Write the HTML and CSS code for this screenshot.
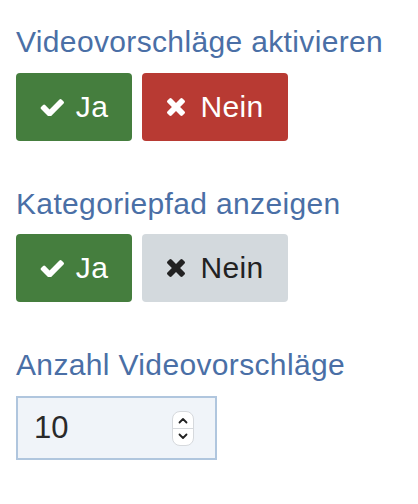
FILE: index.html
```html
<!DOCTYPE html>
<html lang="de">
<head>
<meta charset="utf-8">
<title>Einstellungen</title>
<link rel="stylesheet" href="styles.css">
</head>
<body>
<form class="settings">
  <div class="group">
    <div class="label">Videovorschläge aktivieren</div>
    <div class="btns">
      <button type="button" class="btn btn-yes btn-ja">
        <svg class="ico-check" viewBox="81 266 1590 1188"><path d="M1671 566q0 40-28 68l-724 724-136 136q-28 28-68 28t-68-28l-136-136-362-362q-28-28-28-68t28-68l136-136q28-28 68-28t68 28l294 295 656-657q28-28 68-28t68 28l136 136q28 28 28 68z"/></svg>
        <span>Ja</span>
      </button>
      <button type="button" class="btn btn-no-active btn-nein">
        <svg class="ico-x" viewBox="110 366 1188 1188"><path d="M1298 1322q0 40-28 68l-136 136q-28 28-68 28t-68-28l-294-294-294 294q-28 28-68 28t-68-28l-136-136q-28-28-28-68t28-68l294-294-294-294q-28-28-28-68t28-68l136-136q28-28 68-28t68 28l294 294 294-294q28-28 68-28t68 28l136 136q28 28 28 68t-28 68l-294 294 294 294q28 28 28 68z"/></svg>
        <span>Nein</span>
      </button>
    </div>
  </div>
  <div class="group">
    <div class="label">Kategoriepfad anzeigen</div>
    <div class="btns">
      <button type="button" class="btn btn-yes btn-ja">
        <svg class="ico-check" viewBox="81 266 1590 1188"><path d="M1671 566q0 40-28 68l-724 724-136 136q-28 28-68 28t-68-28l-136-136-362-362q-28-28-28-68t28-68l136-136q28-28 68-28t68 28l294 295 656-657q28-28 68-28t68 28l136 136q28 28 28 68z"/></svg>
        <span>Ja</span>
      </button>
      <button type="button" class="btn btn-no btn-nein">
        <svg class="ico-x" viewBox="110 366 1188 1188"><path d="M1298 1322q0 40-28 68l-136 136q-28 28-68 28t-68-28l-294-294-294 294q-28 28-68 28t-68-28l-136-136q-28-28-28-68t28-68l294-294-294-294q-28-28-28-68t28-68l136-136q28-28 68-28t68 28l294 294 294-294q28-28 68-28t68 28l136 136q28 28 28 68t-28 68l-294 294 294 294q28 28 28 68z"/></svg>
        <span>Nein</span>
      </button>
    </div>
  </div>
  <div class="group">
    <div class="label">Anzahl Videovorschläge</div>
    <div class="num">
      <input class="num-input" type="number" value="10">
      <div class="spin">
        <svg class="spin-up" viewBox="0 0 10 6"><path d="M1.5 5 L5 1.5 L8.5 5"/></svg>
        <div class="spin-line"></div>
        <svg class="spin-down" viewBox="0 0 10 6"><path d="M1.5 1 L5 4.5 L8.5 1"/></svg>
      </div>
    </div>
  </div>
</form>
</body>
</html>
```
FILE: styles.css
```css
html, body {
  margin: 0;
  padding: 0;
  background: #ffffff;
}
body {
  font-family: "Liberation Sans", Arial, Helvetica, sans-serif;
}
.settings {
  padding: 26px 16px 0 16px;
  display: flex;
  flex-direction: column;
  gap: 47px;
}
.label {
  color: #4a6fa6;
  font-size: 30px;
  letter-spacing: 0.35px;
  line-height: 32px;
  margin-bottom: 14.5px;
  white-space: nowrap;
}
.btns {
  display: flex;
  gap: 10px;
}
.btn {
  height: 68px;
  border: none;
  border-radius: 4px;
  display: flex;
  align-items: center;
  justify-content: center;
  font-family: inherit;
  font-size: 30px;
  letter-spacing: 0.3px;
  padding: 0;
  cursor: pointer;
}
.btn-ja {
  width: 116px;
  gap: 12px;
}
.btn-nein {
  width: 146px;
  gap: 16px;
}
.btn-yes {
  background: #457e3e;
  color: #ffffff;
  fill: #ffffff;
}
.btn-no-active {
  background: #b83a33;
  color: #ffffff;
  fill: #ffffff;
}
.btn-no {
  background: #d3d9dd;
  color: #222222;
  fill: #222222;
}
.ico-check {
  width: 24px;
  height: 18px;
}
.ico-x {
  width: 18px;
  height: 18px;
}
.num {
  position: relative;
  width: 201px;
  height: 64px;
}
.num-input {
  box-sizing: border-box;
  width: 201px;
  height: 64px;
  border: 2px solid #b0c6de;
  background: #f0f4f9;
  padding: 0 0 0 16px;
  font-family: inherit;
  font-size: 31px;
  color: #2a2a2a;
  outline: none;
  -moz-appearance: textfield;
  appearance: textfield;
}
.num-input::-webkit-inner-spin-button,
.num-input::-webkit-outer-spin-button {
  -webkit-appearance: none;
  margin: 0;
}
.spin {
  position: absolute;
  left: 156px;
  top: 15px;
  width: 22px;
  height: 35px;
  box-sizing: border-box;
  background: #ffffff;
  border: 1px solid #d6d9dd;
  border-radius: 8px;
  display: flex;
  flex-direction: column;
  align-items: center;
  justify-content: space-between;
  padding: 5px 0;
}
.spin svg {
  width: 10px;
  height: 7px;
  fill: none;
  stroke: #222222;
  stroke-width: 1.8;
  stroke-linecap: round;
  stroke-linejoin: round;
}
.spin-line {
  width: 100%;
  height: 1px;
  background: #d6d9dd;
}
```
